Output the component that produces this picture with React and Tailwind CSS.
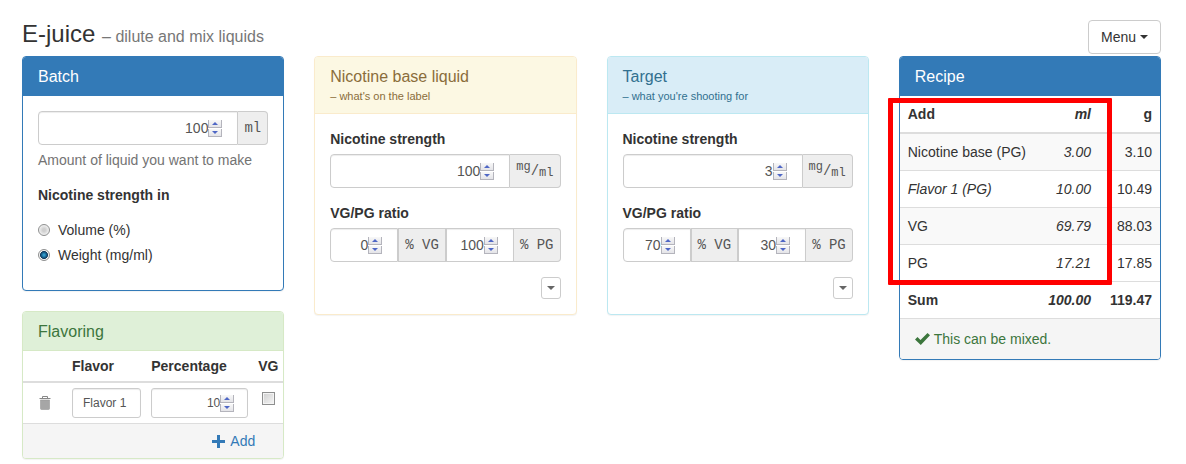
import { useId, useRef } from "react";

const tones = {
  primary: {
    panel: "border-[#337ab7]",
    head: "border-[#337ab7] bg-[#337ab7] text-white",
  },
  success: {
    panel: "border-[#d6e9c6]",
    head: "border-[#d6e9c6] bg-[#dff0d8] text-[#3c763d]",
  },
  warning: {
    panel: "border-[#faebcc]",
    head: "border-[#faebcc] bg-[#fcf8e3] text-[#8a6d3b]",
  },
  info: {
    panel: "border-[#bce8f1]",
    head: "border-[#bce8f1] bg-[#d9edf7] text-[#31708f]",
  },
};

function Panel({ tone, title, note, children }) {
  const t = tones[tone];
  return (
    <section className={`rounded border bg-white shadow-[0_1px_1px_rgba(0,0,0,0.05)] ${t.panel}`}>
      <header className={`rounded-t-[3px] border-b px-[15px] pt-[10px] ${note ? "pb-2" : "pb-2"} ${t.head}`}>
        <h2 className="text-base leading-5">{title}</h2>
        {note && <p className="text-[11px] leading-[18px]">{note}</p>}
      </header>
      {children}
    </section>
  );
}

function Spinner({ onStep }) {
  const button =
    "flex h-2 w-[14px] items-center justify-center border-x border-b border-[#b4b4bc] bg-linear-to-b from-[#f8f8f8] to-[#e4e4e8]";
  return (
    <span className="flex shrink-0 flex-col gap-px">
      <button type="button" tabIndex={-1} aria-label="Increase" className={button} onClick={() => onStep(1)}>
        <svg width="6" height="3" viewBox="0 0 6 3" fill="#4f67c5">
          <path d="M3 0 6 3H0z" />
        </svg>
      </button>
      <button type="button" tabIndex={-1} aria-label="Decrease" className={button} onClick={() => onStep(-1)}>
        <svg width="6" height="3" viewBox="0 0 6 3" fill="#4f67c5">
          <path d="M0 0H6L3 3z" />
        </svg>
      </button>
    </span>
  );
}

function NumberBox({ id, label, value, className = "", small = false }) {
  const ref = useRef(null);
  const step = (dir) => (dir > 0 ? ref.current.stepUp() : ref.current.stepDown());
  return (
    <span
      className={`flex min-w-0 flex-1 items-center border border-[#ccc] bg-white text-[#555] shadow-[inset_0_1px_1px_rgba(0,0,0,0.075)] ${
        small ? "h-[30px] pr-[13px] text-xs" : "h-[34px] pr-[15px] text-sm"
      } ${className}`}
    >
      <input
        ref={ref}
        id={id}
        aria-label={label}
        type="number"
        defaultValue={value}
        className="min-w-0 flex-1 bg-transparent text-right outline-none [appearance:textfield] [&::-webkit-inner-spin-button]:appearance-none"
      />
      <Spinner onStep={step} />
    </span>
  );
}

function Addon({ className = "", children }) {
  return (
    <span
      className={`flex h-[34px] shrink-0 items-center border-y border-r border-[#ccc] bg-[#eee] px-[6px] font-['Liberation_Mono',monospace] text-sm whitespace-pre text-[#555] ${className}`}
    >
      {children}
    </span>
  );
}

function Caret({ className = "" }) {
  return (
    <svg width="8" height="4" viewBox="0 0 8 4" fill="currentColor" className={className}>
      <path d="M0 0H8L4 4z" />
    </svg>
  );
}

function LiquidPanel({ tone, title, note, strength, vg, pg }) {
  const id = useId();
  return (
    <Panel tone={tone} title={title} note={note}>
      <div className="p-[15px]">
        <label htmlFor={id} className="block font-bold">
          Nicotine strength
        </label>
        <div className="mt-[5px] flex">
          <NumberBox id={id} value={strength} className="rounded-l" />
          <Addon className="rounded-r">
            <span className="-mt-2 text-xs">mg</span>/<span className="mt-1 text-xs">ml</span>
          </Addon>
        </div>
        <label htmlFor={`${id}-vg`} className="mt-[15px] block font-bold">
          VG/PG ratio
        </label>
        <div className="mt-[5px] flex">
          <NumberBox id={`${id}-vg`} value={vg} className="rounded-l" />
          <Addon className="border-l">% VG</Addon>
          <NumberBox label="PG percentage" value={pg} />
          <Addon className="rounded-r">% PG</Addon>
        </div>
        <div className="mt-[15px] flex justify-end">
          <button
            type="button"
            aria-label="More options"
            className="flex h-[22px] w-5 items-center justify-center rounded-[3px] border border-[#ccc] bg-white text-[#666]"
          >
            <Caret />
          </button>
        </div>
      </div>
    </Panel>
  );
}

function Radio({ label, checked }) {
  return (
    <label className="flex items-center gap-2">
      <input
        type="radio"
        name="unit"
        defaultChecked={checked}
        className="size-3 appearance-none rounded-full border border-[#8e8f8f] bg-[radial-gradient(circle,#cfcfcf_20%,#f4f4f4_75%)] checked:bg-[radial-gradient(circle,#39b0e5_0,#12557f_40%,#12385c_52%,#f4f4f4_60%)]"
      />
      {label}
    </label>
  );
}

const recipe = [
  { name: "Nicotine base (PG)", ml: "3.00", g: "3.10" },
  { name: "Flavor 1 (PG)", ml: "10.00", g: "10.49", flavor: true },
  { name: "VG", ml: "69.79", g: "88.03" },
  { name: "PG", ml: "17.21", g: "17.85" },
];

export default function App() {
  return (
    <div className="bg-white pt-5 pr-[25px] pb-1 pl-[22px] font-['Liberation_Sans',Arial,sans-serif] text-sm leading-5 text-[#333]">
      <header className="flex items-start justify-between">
        <h1 className="text-2xl leading-7">
          E-juice <small className="text-base text-[#777]">– dilute and mix liquids</small>
        </h1>
        <button
          type="button"
          className="flex h-[34px] items-center gap-1 rounded border border-[#ccc] bg-white px-3"
        >
          Menu <Caret />
        </button>
      </header>

      <main className="mt-[2px] grid grid-cols-4 items-start gap-[30px]">
        <div className="flex flex-col gap-5">
          <Panel tone="primary" title="Batch">
            <div className="px-[15px] pt-[15px] pb-[25px]">
              <div className="flex">
                <NumberBox label="Batch size" value={100} className="rounded-l" />
                <Addon className="rounded-r">ml</Addon>
              </div>
              <p className="mt-[5px] text-[#737373]">Amount of liquid you want to make</p>
              <fieldset className="mt-[15px]">
                <legend className="font-bold">Nicotine strength in</legend>
                <div className="mt-[15px] flex flex-col gap-[5px]">
                  <Radio label="Volume (%)" />
                  <Radio label="Weight (mg/ml)" checked />
                </div>
              </fieldset>
            </div>
          </Panel>

          <Panel tone="success" title="Flavoring">
            <table className="w-full table-fixed">
              <thead>
                <tr className="h-[31px] border-b-2 border-[#ddd] text-left">
                  <th className="w-11" aria-label="Remove" />
                  <th className="px-[5px]">Flavor</th>
                  <th className="w-[107px] px-[5px]">Percentage</th>
                  <th className="w-[30px] px-[5px]">VG</th>
                </tr>
              </thead>
              <tbody>
                <tr>
                  <td className="pl-[15px]">
                    <button type="button" aria-label="Remove flavor" className="block">
                      <svg width="14" height="14" viewBox="0 0 14 14">
                        <path d="M4.5 2V.5h5V2M1.500 2.500h11" fill="none" stroke="#888" />
                        <path d="M2.500 4h9v8.500q0 1-1 1h-7q-1 0-1-1z" fill="#a6a6a6" stroke="#999" strokeWidth="0.6" />
                      </svg>
                    </button>
                  </td>
                  <td className="p-[5px]">
                    <input
                      aria-label="Flavor name"
                      defaultValue="Flavor 1"
                      className="block h-[30px] w-full rounded-[3px] border border-[#ccc] px-[10px] text-xs text-[#555] shadow-[inset_0_1px_1px_rgba(0,0,0,0.075)]"
                    />
                  </td>
                  <td className="p-[5px]">
                    <span className="flex">
                      <NumberBox small label="Flavor percentage" value={10} className="rounded-[3px]" />
                    </span>
                  </td>
                  <td className="pt-[9px] pl-[9px] align-top">
                    <input
                      type="checkbox"
                      aria-label="Flavor is VG based"
                      className="block size-[13px] appearance-none border border-[#8e8f8f] bg-linear-to-br from-[#cfcfcf] to-[#f6f6f6] shadow-[inset_0_0_0_1px_#f4f4f4] checked:bg-[#337ab7]"
                    />
                  </td>
                </tr>
              </tbody>
            </table>
            <footer className="flex justify-end rounded-b-[3px] border-t border-[#ddd] bg-[#f5f5f5] py-[7px] pr-7">
              <button type="button" className="flex items-center gap-[5px] text-[#337ab7]">
                <svg width="13" height="13" viewBox="0 0 13 13" fill="currentColor">
                  <path d="M5 0h3v5h5v3H8v5H5V8H0V5h5z" />
                </svg>
                Add
              </button>
            </footer>
          </Panel>
        </div>

        <LiquidPanel
          tone="warning"
          title="Nicotine base liquid"
          note="– what's on the label"
          strength={100}
          vg={0}
          pg={100}
        />
        <LiquidPanel
          tone="info"
          title="Target"
          note="– what you're shooting for"
          strength={3}
          vg={70}
          pg={30}
        />

        <div className="relative">
          <Panel tone="primary" title="Recipe">
            <table className="w-full">
              <thead>
                <tr className="h-[37px] border-b-2 border-[#ddd]">
                  <th className="px-2 text-left">Add</th>
                  <th className="px-2 text-right italic">ml</th>
                  <th className="w-[61px] px-2 text-right">g</th>
                </tr>
              </thead>
              <tbody>
                {recipe.map((row) => (
                  <tr key={row.name} className="h-[37px] border-b border-[#ddd] odd:bg-[#f9f9f9]">
                    <td className={`px-2 ${row.flavor ? "italic" : ""}`}>{row.name}</td>
                    <td className="px-2 text-right italic">{row.ml}</td>
                    <td className="px-2 text-right">{row.g}</td>
                  </tr>
                ))}
              </tbody>
              <tfoot>
                <tr className="h-[37px] font-bold">
                  <td className="px-2">Sum</td>
                  <td className="px-2 text-right italic">100.00</td>
                  <td className="px-2 text-right">119.47</td>
                </tr>
              </tfoot>
            </table>
            <footer className="flex items-center gap-1 rounded-b-[3px] border-t border-[#ddd] bg-[#f5f5f5] px-[15px] py-[10px] text-[#3c763d]">
              <svg width="15" height="12" viewBox="0 0 15 12" fill="currentColor">
                <path d="M0 6.500 2.500 4 5.500 7 12.500 0 15 2.300 5.800 12z" />
              </svg>
              This can be mixed.
            </footer>
          </Panel>
          <div className="pointer-events-none absolute top-[42px] right-[49px] -left-[11px] h-[187px] rounded-[1px] border-[5px] border-[#f00]" />
        </div>
      </main>
    </div>
  );
}
